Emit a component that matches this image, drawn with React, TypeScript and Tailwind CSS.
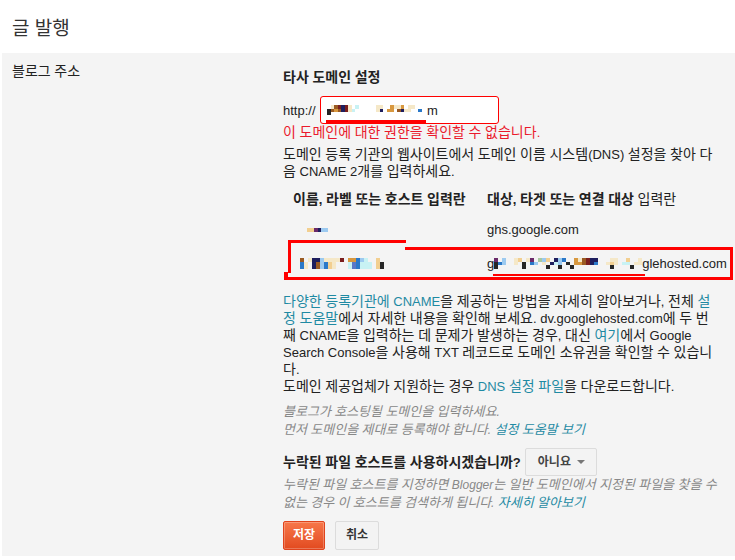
import React from 'react'

const PAL: Record<string, string> = {
  b: '#9a5a22',
  n: '#1e1e5e',
  o: '#d8983f',
  p: '#f5e8c8',
  c: '#c8f2f4',
  l: '#9ccaf0',
  B: '#2a78c8',
  r: '#7a1e1e',
  k: '#262626',
  u: '#6a2a6a',
  y: '#f2cf90',
  g: '#a8c8a0',
  s: '#5a78c8',
}

// redacted (pixelated) bits of the screenshot
function Pixels({ rows, w = 3.5, h = 3.5 }: { rows: string[]; w?: number; h?: number }) {
  const cols = Math.max(...rows.map((r) => r.length))
  return (
    <svg width={cols * w} height={rows.length * h} shapeRendering="crispEdges" className="block shrink-0">
      {rows.flatMap((row, i) =>
        [...row].map((ch, j) =>
          ch === '.' ? null : (
            <rect key={`${i}-${j}`} x={j * w} y={i * h} width={w} height={h} fill={PAL[ch]} />
          ),
        ),
      )}
    </svg>
  )
}

// Noto's hangul runs narrow, so hangul gets a slightly bigger size than the latin text
const HANGUL = /([\uac00-\ud7a3]+)/
function K({ children, small }: { children: string; small?: boolean }) {
  return (
    <>
      {children.split(HANGUL).map((part, i) =>
        i % 2 === 1 ? (
          <span key={i} className={small ? 'text-[13px]' : 'text-[14px]'}>
            {part}
          </span>
        ) : (
          part
        ),
      )}
    </>
  )
}

function A({ children, small }: { children: string; small?: boolean }) {
  return (
    <span className="text-[#1f8aa3]">
      <K small={small}>{children}</K>
    </span>
  )
}

export default function App() {
  return (
    <div
      className="relative w-[735px] h-[560px] bg-white text-[13px] leading-[17px] text-[#222]"
      style={{ fontFamily: '"Liberation Sans", "Noto Sans CJK KR", sans-serif' }}
    >
      <h1 className="h-[53px] pl-[12px] pt-[19px] text-[19px] leading-[20px] text-[#333]">글 발행</h1>

      <div className="ml-[2px] flex h-[503px] bg-[#f4f4f4]">
        {/* label column */}
        <div className="w-[281px] shrink-0 pl-[10px] pt-[10px]">
          <K>블로그 주소</K>
        </div>

        {/* content column */}
        <div className="w-[440px] pt-[16px]">
          <div className="font-bold">
            <K>타사 도메인 설정</K>
          </div>

          <div className="mt-[10px] flex items-center gap-[4px]">
            <span>http://</span>
            <div className="flex h-[28px] w-[179px] items-center rounded-[3px] border border-[#ff0000] bg-white pl-[6px]">
              <Pixels rows={['.pbrnrp.c.....pp..oppo.pp....', 'kbobnrpc......pn.oo.bnpp..B.', 'k............................']} />
              <span className="-ml-[1px]">m</span>
            </div>
          </div>

          <div className="text-[#ea1a2c]">
            <K>이 도메인에 대한 권한을 확인할 수 없습니다.</K>
          </div>

          <p className="mt-[5px] w-[432px]">
            <K>도메인 등록 기관의 웹사이트에서 도메인 이름 시스템(DNS) 설정을 찾아 다음 CNAME 2개를 입력하세요.</K>
          </p>

          {/* CNAME table */}
          <div className="mt-[11px] w-[450px]">
            <div className="flex h-[17px]">
              <div className="w-[204px] shrink-0 pl-[10px] font-bold">
                <K>이름, 라벨 또는 호스트 입력란</K>
              </div>
              <div>
                <span className="font-bold">
                  <K>대상, 타겟 또는 연결 대상</K>
                </span>{' '}
                <K>입력란</K>
              </div>
            </div>
            <div className="mt-[13px] flex h-[17px] items-center">
              <div className="w-[204px] shrink-0 pl-[24px]">
                <Pixels rows={['yyunll']} h={4} />
              </div>
              <div>ghs.google.com</div>
            </div>
            <div className="mt-[17px] flex h-[17px] items-center">
              <div className="w-[204px] shrink-0 pl-[17px]">
                <Pixels
                  w={4}
                  h={3.7}
                  rows={['b.pnnlppppr.ooBlc..y', 'Bp.nblByp...csBccc.yk', 'Bp.nblByp...csBccc.yk']}
                />
              </div>
              <div className="flex items-center">
                <span>g</span>
                <Pixels
                  w={4}
                  h={3.5}
                  rows={[
                    'u.l..py.pu.gly.nlB..opbrnn...pp..y..p',
                    'kBl..p.k.Bl.p.ncl.k.oobrnB..pyp.cc.pp',
                    'k......k.....k..k..k.........k....k..',
                  ]}
                />
                <span>glehosted.com</span>
              </div>
            </div>
          </div>

          <p className="mt-[21px] w-[432px]">
            <A>다양한 등록기관에 CNAME</A>
            <K>을 제공하는 방법을 자세히 알아보거나, 전체 </K>
            <A>설정 도움말</A>
            <K>에서 자세한 내용을 확인해 보세요. dv.googlehosted.com에 두 번째 CNAME을 입력하는 데 문제가 발생하는 경우, 대신 </K>
            <A>여기</A>
            <K>에서 Google Search Console을 사용해 TXT 레코드로 도메인 소유권을 확인할 수 있습니다.</K>
            <br />
            <K>도메인 제공업체가 지원하는 경우 </K>
            <A>DNS 설정 파일</A>
            <K>을 다운로드합니다.</K>
          </p>

          <p className="mt-[8px] text-[12px] italic text-[#888]">
            <K small>블로그가 호스팅될 도메인을 입력하세요.</K>
            <br />
            <K small>먼저 도메인을 제대로 등록해야 합니다. </K>
            <A small>설정 도움말 보기</A>
          </p>

          <div className="mt-[9px] flex items-center gap-[4px]">
            <span className="font-bold">
              <K>누락된 파일 호스트를 사용하시겠습니까?</K>
            </span>
            <button className="flex h-[28px] w-[72px] items-center justify-between rounded-[2px] border border-[#dcdcdc] bg-[#f3f3f3] pl-[12px] pr-[11px] text-[12px] font-bold text-[#444]">
              아니요
              <svg width="8" height="4" viewBox="0 0 8 4">
                <path d="M0 0h8L4 4z" fill="#777" />
              </svg>
            </button>
          </div>

          <p className="w-[436px] text-[12px] italic text-[#888]">
            <K small>누락된 파일 호스트를 지정하면 Blogger는 일반 도메인에서 지정된 파일을 찾을 수 없는 경우 이 호스트를 검색하게 됩니다. </K>
            <A small>자세히 알아보기</A>
          </p>

          <div className="mt-[9px] flex gap-[10px]">
            <button className="h-[29px] w-[42px] rounded-[2px] border border-[#e0431c] bg-gradient-to-b from-[#f77749] to-[#e24a1f] text-[12px] font-bold text-white shadow-[inset_0_0_0_1px_rgba(255,255,255,0.25)]">
              저장
            </button>
            <button className="h-[29px] w-[44px] rounded-[2px] border border-[#dcdcdc] bg-[#f3f3f3] text-[12px] font-bold text-[#333]">
              취소
            </button>
          </div>
        </div>
      </div>

      {/* red markup drawn over the screenshot */}
      <svg className="pointer-events-none absolute left-0 top-0" width="735" height="560" shapeRendering="crispEdges">
        <rect x="326" y="120" width="100" height="3" fill="#ff0000" />
        <rect x="288" y="240" width="118" height="3" fill="#ff0000" />
        <rect x="288" y="240" width="3" height="33" fill="#ff0000" />
        <rect x="284" y="272" width="4" height="8" fill="#ff0000" />
        <rect x="284" y="277" width="449" height="3" fill="#ff0000" />
        <rect x="405" y="247" width="328" height="3" fill="#ff0000" />
        <rect x="730" y="247" width="3" height="33" fill="#ff0000" />
        <rect x="493" y="274" width="152" height="2" fill="#ff0000" />
      </svg>
    </div>
  )
}
